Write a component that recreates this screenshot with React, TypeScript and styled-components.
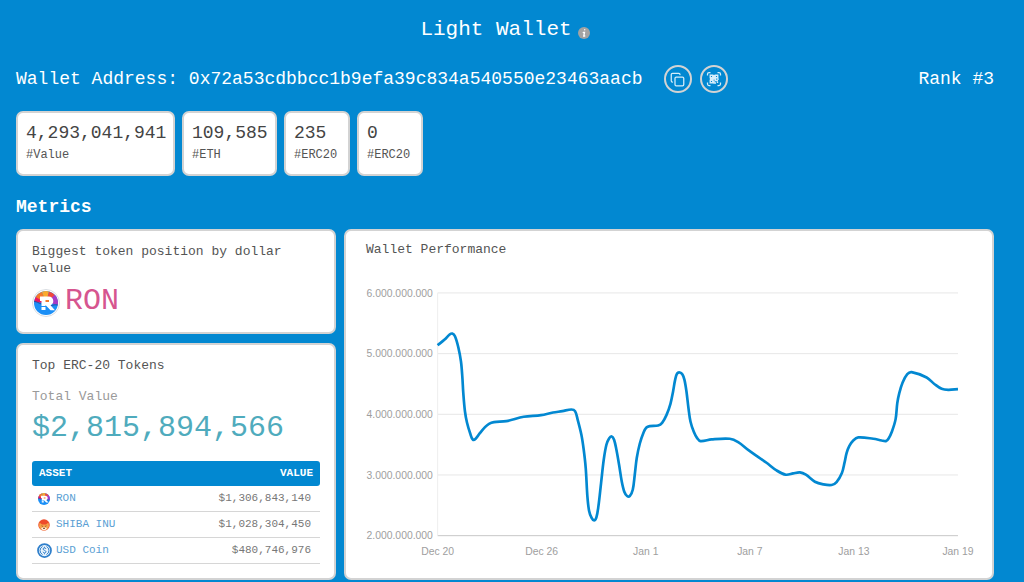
import React from 'react';
import styled, { createGlobalStyle } from 'styled-components';
import { Copy } from 'lucide-react';

const mono = '"Liberation Mono", monospace';
const blue = '#0288d1';

const GlobalStyle = createGlobalStyle`
  * { box-sizing: border-box; }
  body { margin: 0; background: ${blue}; font-family: ${mono}; color: #545454; }
  h1, h2, h3, p, dl, dd { margin: 0; font-weight: 400; }
`;

const Page = styled.main`
  padding: 17px 30px 2px 16px;
`;

const TitleBar = styled.header`
  display: flex;
  justify-content: center;
  align-items: center;
  gap: 6px;
  color: #fff;
`;

const Title = styled.h1`
  font-size: 21px;
  line-height: 26px;
`;

const InfoIcon = styled.svg`
  width: 12px;
  height: 12px;
  margin-top: 6px;
`;

const AddressBar = styled.section`
  display: flex;
  align-items: center;
  margin-top: 22px;
  color: #fff;
  font-size: 18px;
  line-height: 24px;
`;

const Actions = styled.div`
  display: flex;
  gap: 8px;
  margin-left: 21px;
`;

const IconButton = styled.button`
  display: grid;
  place-items: center;
  width: 28px;
  height: 28px;
  padding: 0;
  border: 2px solid #d3d3d3;
  border-radius: 50%;
  background: transparent;
  color: #d6edfa;
`;

const Rank = styled.span`
  margin-left: auto;
`;

const Stats = styled.dl`
  display: flex;
  gap: 7px;
  margin-top: 18px;
`;

const panel = `
  border: 2px solid #d3d3d3;
  border-radius: 7px;
  background: #fff;
`;

const Stat = styled.div<{ $width: number }>`
  ${panel}
  display: flex;
  flex-direction: column-reverse;
  justify-content: flex-end;
  min-width: ${(p) => p.$width}px;
  height: 65px;
  padding: 8px 6px 8px 8px;
`;

const StatValue = styled.dd`
  font-size: 18px;
  line-height: 24px;
  color: #444;
`;

const StatLabel = styled.dt`
  font-size: 12px;
  line-height: 20px;
`;

const SectionTitle = styled.h2`
  margin-top: 20px;
  font-size: 18px;
  line-height: 22px;
  font-weight: 700;
  color: #fff;
`;

const Metrics = styled.section`
  display: grid;
  grid-template-columns: 320px minmax(0, 1fr);
  gap: 8px;
  margin-top: 11px;
`;

const Column = styled.div`
  display: flex;
  flex-direction: column;
  gap: 9px;
`;

const Card = styled.article`
  ${panel}
  padding: 12px 14px 14px;
`;

const ChartCard = styled.article`
  ${panel}
  padding-top: 11px;
`;

const CardTitle = styled.h3`
  font-size: 13px;
  line-height: 17px;
`;

const ChartTitle = styled(CardTitle)`
  padding-left: 20px;
  line-height: 16px;
`;

const Highlight = styled.p`
  display: flex;
  align-items: center;
  gap: 5px;
  margin-top: 7px;
  font-size: 30px;
  line-height: 34px;
  color: #d6558f;

  svg { margin-top: 4px; }
`;

const TotalLabel = styled.p`
  margin-top: 15px;
  font-size: 13px;
  line-height: 16px;
  color: #9a9a9a;
`;

const Total = styled.p`
  margin-top: 5px;
  font-size: 30px;
  line-height: 36px;
  color: #4fabbd;
`;

const Table = styled.table`
  width: 100%;
  margin-top: 15px;
  border-collapse: separate;
  border-spacing: 0;
  font-size: 11px;
`;

const HeadCell = styled.th<{ $end?: boolean }>`
  height: 25px;
  padding: 0 7px 2px;
  background: ${blue};
  color: #fff;
  text-align: ${(p) => (p.$end ? 'right' : 'left')};
  border-radius: ${(p) => (p.$end ? '0 3px 3px 0' : '3px 0 0 3px')};
`;

const Cell = styled.td<{ $end?: boolean }>`
  height: 26px;
  padding: ${(p) => (p.$end ? '0 9px 2px 0' : '0 0 2px 4px')};
  border-bottom: 1px solid #d6d6d6;
  color: #777;
  text-align: ${(p) => (p.$end ? 'right' : 'left')};
`;

const Asset = styled.a`
  display: flex;
  align-items: center;
  gap: 4px;
  color: #5b9fd4;
  text-decoration: none;
`;

const LogoSlot = styled.span`
  display: grid;
  place-items: center;
  width: 16px;
  height: 16px;
  margin-top: 2px;
`;

const Chart = styled.svg`
  display: block;
  width: 100%;
  height: auto;
  font-family: "Liberation Sans", Arial, sans-serif;
  font-size: 11px;
  fill: #9e9e9e;
`;

function RonLogo({ size, ring = false }: { size: number; ring?: boolean }) {
  return (
    <svg width={size} height={size} viewBox="0 0 28 28" aria-hidden="true">
      {ring && <circle cx="14" cy="14" r="13.5" fill="#fff" stroke="#d9dde2" />}
      <g transform={ring ? undefined : 'translate(-2.3 -2.3) scale(1.165)'}>
        <circle cx="14" cy="14" r="12" fill="#1b8ff6" />
        <path d="M14 14 2.3 13A12 12 0 0 1 4.500 6.700Z" fill="#ec1763" />
        <path d="M14 14 3.600 8A12 12 0 0 1 10 2.700Z" fill="#f4792b" />
        <path d="M14 14 10 2.700a12 12 0 0 1 7 -.3Z" fill="#fba92d" />
        <path d="M14 14 17 2.400a12 12 0 0 1 6.300 4Z" fill="#f0483c" />
        <path d="M14 14 22.800 5.800A12 12 0 0 1 25.900 15.500Z" fill="#a63cc6" />
        <path d="M2.200 12.500c3 0 4 1.500 7 2.500M19 17c2-1.200 4-1.400 6.700-1" fill="none" stroke="#2a4b9e" />
        <path
          d="M8 7.500h8.500c3 0 4.800 2 4.800 4.500 0 2-1 3.500-2.800 4.200l4.500 5h-4.500l-5-5.200v5h-4V12H8z"
          fill="#fff"
        />
        <path d="M13.500 11h3.500v2h-3.500z" fill="#f4792b" />
        <path d="M9 17.500h5" stroke="#1b8ff6" />
      </g>
    </svg>
  );
}

function ShibaLogo() {
  return (
    <svg width="12" height="12" viewBox="0 0 24 24" aria-hidden="true">
      <circle cx="12" cy="12" r="11.500" fill="#ee4b2b" />
      <path d="M3 7l5 4h8l5-4 1 8-4 6-6 2-6-2-4-6z" fill="#f6a24a" />
      <path d="M6 18l4-1 2-1 2 1 4 1-2 3-4 2-4-2z" fill="#fff3e2" />
      <path d="M7 13.500l3 1.500M17 13.500l-3 1.500M10.500 18h3L12 20z" stroke="#7a3312" strokeWidth="1.200" fill="#5a2312" />
    </svg>
  );
}

function UsdLogo() {
  return (
    <svg width="15" height="15" viewBox="0 0 30 30" fill="none" stroke="#2f7fcb" aria-hidden="true">
      <circle cx="15" cy="15" r="13" fill="#eaf4fc" strokeWidth="3.500" />
      <path d="M11 7a9 9 0 0 0 0 16M19 7a9 9 0 0 1 0 16" strokeWidth="2" />
      <path d="M18 12c-.5-3-6-3-6 0s6 2.500 6 5.500-5.500 3.500-6 0M15 7.500v2M15 20.500v2" strokeWidth="2" />
    </svg>
  );
}

function QrIcon() {
  return (
    <svg width="16" height="16" viewBox="0 0 32 32" fill="none" stroke="currentColor" aria-hidden="true">
      <path d="M3 9V6a3 3 0 0 1 3-3h3M23 3h3a3 3 0 0 1 3 3v3M29 23v3a3 3 0 0 1-3 3h-3M9 29H6a3 3 0 0 1-3-3v-3" strokeWidth="2.500" />
      <path d="M8.500 8.500h5v5h-5zM18.500 8.500h5v5h-5zM8.500 18.500h5v5h-5zM16 8v8H8M16 16h3v3h5M24 15v3M16 19v5h4M23 21v3" strokeWidth="2.800" />
    </svg>
  );
}

const stats = [
  { value: '4,293,041,941', label: '#Value', width: 159 },
  { value: '109,585', label: '#ETH', width: 95 },
  { value: '235', label: '#ERC20', width: 66 },
  { value: '0', label: '#ERC20', width: 66 },
];

const tokens = [
  { name: 'RON', value: '$1,306,843,140', logo: <RonLogo size={12} /> },
  { name: 'SHIBA INU', value: '$1,028,304,450', logo: <ShibaLogo /> },
  { name: 'USD Coin', value: '$480,746,976', logo: <UsdLogo /> },
];

// Performance curve: x runs over 1560 units (30 days), y over 729 units (6bn down to 2bn).
const curve: [number, number][] = [
  [0, 157], [21, 140], [36, 125], [44, 122], [52, 130], [62, 163], [70, 206], [74, 251], [77, 301],
  [82, 356], [88, 389], [98, 423], [106, 441], [114, 438], [126, 422], [142, 403], [154, 393],
  [169, 388], [206, 385], [258, 372], [310, 367], [346, 359], [374, 355], [401, 350], [412, 355],
  [420, 381], [431, 426], [438, 471], [444, 526], [449, 611], [454, 654], [461, 674], [469, 683],
  [476, 674], [482, 641], [490, 571], [498, 501], [506, 456], [514, 437], [522, 431], [529, 441],
  [536, 471], [544, 516], [552, 566], [560, 598], [568, 610], [576, 610], [585, 591], [591, 546],
  [597, 496], [606, 453], [618, 418], [626, 404], [636, 400], [661, 398], [673, 390], [686, 367],
  [698, 333], [706, 295], [712, 261], [718, 242], [726, 239], [734, 245], [740, 261], [746, 296],
  [752, 346], [758, 386], [768, 417], [778, 436], [788, 445], [821, 440], [876, 438], [901, 448],
  [933, 473], [986, 510], [1016, 533], [1044, 546], [1066, 542], [1086, 539], [1104, 546],
  [1131, 567], [1156, 575], [1181, 577], [1196, 568], [1212, 541], [1220, 509], [1226, 481],
  [1234, 460], [1246, 443], [1261, 434], [1306, 438], [1331, 443], [1344, 445], [1352, 437],
  [1362, 416], [1373, 379], [1378, 331], [1384, 301], [1394, 269], [1408, 244], [1421, 238],
  [1466, 254], [1491, 275], [1511, 288], [1531, 291], [1560, 289],
];

function smoothPath(pts: [number, number][]) {
  let d = `M${pts[0][0]} ${pts[0][1]}`;
  for (let i = 0; i < pts.length - 1; i++) {
    const before = pts[Math.max(i - 1, 0)];
    const from = pts[i];
    const to = pts[i + 1];
    const after = pts[Math.min(i + 2, pts.length - 1)];
    // Handles scale with the segment so that uneven spacing never overshoots.
    const span = Math.hypot(to[0] - from[0], to[1] - from[1]) / 3;
    const a = Math.hypot(to[0] - before[0], to[1] - before[1]) || 1;
    const b = Math.hypot(after[0] - from[0], after[1] - from[1]) || 1;
    const c1 = [from[0] + ((to[0] - before[0]) / a) * span, from[1] + ((to[1] - before[1]) / a) * span];
    const c2 = [to[0] - ((after[0] - from[0]) / b) * span, to[1] - ((after[1] - from[1]) / b) * span];
    d += `C${c1[0]} ${c1[1]} ${c2[0]} ${c2[1]} ${to[0]} ${to[1]}`;
  }
  return d;
}

const plot = { x: 97, y: 37, width: 551, height: 257 };
const yLabels = ['6.000.000.000', '5.000.000.000', '4.000.000.000', '3.000.000.000', '2.000.000.000'];
const xLabels = ['Dec 20', 'Dec 26', 'Jan 1', 'Jan 7', 'Jan 13', 'Jan 19'];

function PerformanceChart() {
  return (
    <Chart viewBox="0 0 684 339" role="img" aria-label="Wallet value from Dec 20 to Jan 19">
      {yLabels.map((label, i) => {
        const y = plot.y + (plot.height * i) / (yLabels.length - 1);
        return (
          <g key={label}>
            <line x1={plot.x} x2={plot.x + plot.width} y1={y} y2={y} stroke={i === yLabels.length - 1 ? '#c4c4c4' : '#e6e6e6'} />
            <text x={plot.x - 5} y={y + 4} textAnchor="end">{label}</text>
          </g>
        );
      })}
      <line x1={plot.x} x2={plot.x} y1={plot.y} y2={plot.y + plot.height} stroke="#ededed" />
      {xLabels.map((label, i) => (
        <text key={label} x={plot.x + (plot.width * i) / (xLabels.length - 1)} y={plot.y + plot.height + 21} textAnchor="middle">
          {label}
        </text>
      ))}
      <svg x={plot.x} y={plot.y} width={plot.width} height={plot.height} viewBox="0 0 1560 729" preserveAspectRatio="none" overflow="visible">
        <path d={smoothPath(curve)} fill="none" stroke={blue} strokeWidth="8" />
      </svg>
    </Chart>
  );
}

export default function App() {
  return (
    <Page>
      <GlobalStyle />
      <TitleBar>
        <Title>Light Wallet</Title>
        <InfoIcon viewBox="0 0 24 24" role="img" aria-label="Info">
          <circle cx="12" cy="12" r="12" fill="#a3a3a3" />
          <path d="M13.500 5.500h-.1M10.500 11h2.500l-1.500 7h2" fill="none" stroke="#fff" strokeWidth="2.600" strokeLinecap="round" />
        </InfoIcon>
      </TitleBar>

      <AddressBar>
        <span>Wallet Address: 0x72a53cdbbcc1b9efa39c834a540550e23463aacb</span>
        <Actions>
          <IconButton type="button" aria-label="Copy address"><Copy size={15} strokeWidth={2} /></IconButton>
          <IconButton type="button" aria-label="Show QR code"><QrIcon /></IconButton>
        </Actions>
        <Rank>Rank #3</Rank>
      </AddressBar>

      <Stats>
        {stats.map((s, i) => (
          <Stat key={i} $width={s.width}>
            <StatLabel>{s.label}</StatLabel>
            <StatValue>{s.value}</StatValue>
          </Stat>
        ))}
      </Stats>

      <SectionTitle>Metrics</SectionTitle>
      <Metrics>
        <Column>
          <Card>
            <CardTitle>Biggest token position by dollar value</CardTitle>
            <Highlight><RonLogo size={28} ring />RON</Highlight>
          </Card>
          <Card>
            <CardTitle>Top ERC-20 Tokens</CardTitle>
            <TotalLabel>Total Value</TotalLabel>
            <Total>$2,815,894,566</Total>
            <Table>
              <thead>
                <tr>
                  <HeadCell scope="col">ASSET</HeadCell>
                  <HeadCell scope="col" $end>VALUE</HeadCell>
                </tr>
              </thead>
              <tbody>
                {tokens.map((t) => (
                  <tr key={t.name}>
                    <Cell><Asset href="#"><LogoSlot>{t.logo}</LogoSlot>{t.name}</Asset></Cell>
                    <Cell $end>{t.value}</Cell>
                  </tr>
                ))}
              </tbody>
            </Table>
          </Card>
        </Column>
        <ChartCard>
          <ChartTitle>Wallet Performance</ChartTitle>
          <PerformanceChart />
        </ChartCard>
      </Metrics>
    </Page>
  );
}
